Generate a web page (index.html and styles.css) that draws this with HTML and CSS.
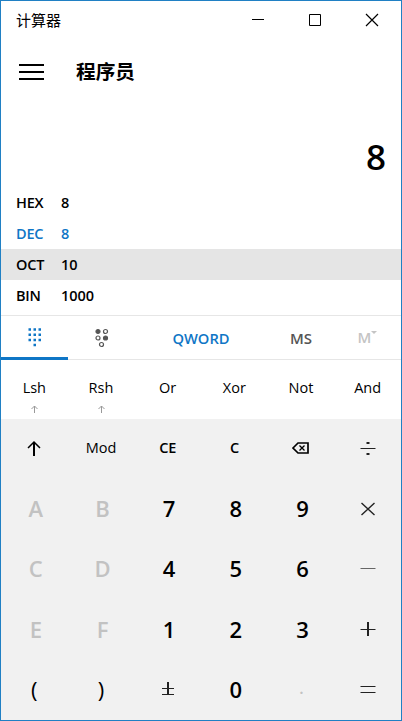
FILE: index.html
```html
<!DOCTYPE html>
<html lang="zh-CN">
<head>
<meta charset="utf-8">
<title>计算器</title>
<link rel="stylesheet" href="styles.css">
</head>
<body>
<main class="window">
  <header class="titlebar">
    <span class="app-name">计算器</span>
    <div class="controls">
      <svg width="57" height="38"><path d="M22 18.5h12"/></svg>
      <svg width="57" height="38"><path d="M22.5 13.5h11v11h-11z"/></svg>
      <svg class="close" width="57" height="38"><path d="M22 13l12 12m0-12l-12 12"/></svg>
    </div>
  </header>
  <div class="mode">
    <svg class="menu" width="25" height="16"><path d="M0 1h25M0 8h25M0 15h25"/></svg>
    <h1>程序员</h1>
  </div>
  <div class="result">8</div>
  <div class="radixes">
    <div class="radix"><span>HEX</span><b>8</b></div>
    <div class="radix active"><span>DEC</span><b>8</b></div>
    <div class="radix hover"><span>OCT</span><b>10</b></div>
    <div class="radix"><span>BIN</span><b>1000</b></div>
  </div>
  <nav class="toolbar">
    <button class="tab selected"><svg width="14" height="20"><path d="M.5 2.500h2.500m2.500 0h2.500m2.500 0h2.500M.5 7.700h2.500m2.500 0h2.500m2.500 0h2.500M.5 12.900h2.500m2.500 0h2.500m2.500 0h2.500M5.500 18h2.500"/></svg></button>
    <button class="tab"><svg class="bits" width="15" height="20"><circle class="filled" cx="4" cy="3.500" r="2"/><circle cx="11.500" cy="3.500" r="2"/><circle cx="4" cy="10" r="2"/><circle class="filled" cx="11.500" cy="10" r="2"/><circle cx="7.500" cy="16.500" r="2"/></svg></button>
    <button class="tab word">QWORD</button>
    <button class="tab store">MS</button>
    <button class="tab memory">M<svg width="6" height="4"><path d="M0 0h6L3 3z"/></svg></button>
  </nav>
  <div class="bitwise">
    <button>Lsh<svg class="hint" width="7" height="8"><path d="M3.500 8V1M.5 4l3-3 3 3"/></svg></button>
    <button>Rsh<svg class="hint" width="7" height="8"><path d="M3.500 8V1M.5 4l3-3 3 3"/></svg></button>
    <button>Or</button>
    <button>Xor</button>
    <button>Not</button>
    <button>And</button>
  </div>
  <div class="keypad">
    <button><svg class="shift" width="16" height="16"><path d="M2 8l6-6 6 6"/><path class="stem" d="M8 2v14"/></svg></button>
    <button class="mod">Mod</button>
    <button class="clear">CE</button>
    <button class="clear">C</button>
    <button><svg class="erase" width="17" height="12"><path d="M1 6l5-5h10v10H6z"/><path class="cross" d="M7.500 3.500l5 5m0-5l-5 5"/></svg></button>
    <button><svg class="op" width="16" height="16"><path d="M.5 8.500h15"/><path class="dot" d="M6.500 3h3M6.500 14h3"/></svg></button>

    <button class="digit off">A</button>
    <button class="digit off">B</button>
    <button class="digit">7</button>
    <button class="digit">8</button>
    <button class="digit">9</button>
    <button><svg class="op times" width="16" height="16"><path d="M1.500 3l13 12M14.500 3l-13 12"/></svg></button>

    <button class="digit off">C</button>
    <button class="digit off">D</button>
    <button class="digit">4</button>
    <button class="digit">5</button>
    <button class="digit">6</button>
    <button><svg class="op minus" width="16" height="16"><path d="M.5 8.500h15"/></svg></button>

    <button class="digit off">E</button>
    <button class="digit off">F</button>
    <button class="digit">1</button>
    <button class="digit">2</button>
    <button class="digit">3</button>
    <button><svg class="op" width="16" height="16"><path d="M.5 8.500h15"/><path class="dot" d="M8 1v14"/></svg></button>

    <button class="paren">(</button>
    <button class="paren">)</button>
    <button><svg class="op" width="16" height="16"><path d="M2 7.500h12M2 13.500h12"/><path class="dot" d="M8 1v12"/></svg></button>
    <button class="digit">0</button>
    <button class="digit off point">.</button>
    <button><svg class="op equals" width="16" height="16"><path d="M.5 5.500h15M.5 11.500h15"/></svg></button>
  </div>
</main>
</body>
</html>
```
FILE: styles.css
```css
* { box-sizing: border-box; }

body {
  margin: 0;
  font-family: "Open Sans", "Noto Sans", "Noto Sans CJK SC", sans-serif;
  font-size: 14.5px;
  color: #000;
}

svg { display: block; fill: none; stroke: currentColor; }

button {
  display: flex;
  align-items: center;
  justify-content: center;
  min-width: 0;
  padding: 0;
  border: 0;
  background: none;
  font: inherit;
  color: inherit;
}

.window {
  display: flex;
  flex-direction: column;
  width: 402px;
  height: 721px;
  border: 1px solid #2080c4;
  background: #fff;
}

.titlebar {
  display: flex;
  justify-content: space-between;
  height: 38px;
  padding-left: 15px;
}

.app-name {
  font-family: "Noto Sans CJK SC", sans-serif;
  font-size: 15px;
  line-height: 38px;
}

.controls { display: flex; }
.close { stroke-width: 1.2; }

.mode {
  display: flex;
  align-items: center;
  gap: 32px;
  height: 66px;
  padding-left: 18px;
}

.menu { stroke-width: 2; }

h1 {
  margin: 0 0 2px;
  font: 700 19.7px/28px "Noto Sans CJK SC", sans-serif;
}

.result {
  height: 82px;
  padding: 26px 15px 0 0;
  font-size: 35px;
  font-weight: 600;
  line-height: 52px;
  text-align: right;
}

.radixes { height: 128px; }

.radix {
  display: flex;
  height: 31px;
  padding-left: 15px;
  font-size: 14.5px;
  font-weight: 600;
  line-height: 31px;
}

.radix span { width: 45px; letter-spacing: -.2px; }
.radix b { font-weight: 600; }
.radix.active { color: #0f76c6; }
.radix.hover { background: #e5e5e5; }

.toolbar {
  display: grid;
  grid-template-columns: 67px 67px 133px 66px 67px;
  height: 45px;
  border-top: 1px solid #e6e6e6;
  border-bottom: 1px solid #e6e6e6;
  color: #555;
}

.tab { font-weight: 600; }

.tab.selected {
  margin-bottom: -1px;
  padding-top: 1px;
  border-bottom: 3px solid #0f76c6;
  stroke-width: 2.5;
  color: #0f76c6;
}

.bits { stroke-width: 1.2; }
.filled { fill: currentColor; }
.word { padding-right: 1px; color: #0f76c6; font-size: 14.7px; }
.store { font-size: 15px; }
.memory { padding-bottom: 2px; color: #c4c4c4; font-size: 15px; }
.memory svg { margin: 0 0 8px; fill: currentColor; stroke: none; }

.bitwise {
  display: grid;
  grid-template-columns: repeat(6, 1fr);
  height: 59px;
}

.bitwise button { position: relative; padding-bottom: 5px; }

.hint {
  position: absolute;
  bottom: 6px;
  left: calc(50% - 3px);
  color: #999;
}

.keypad {
  display: grid;
  flex: 1;
  grid-template-columns: repeat(6, 1fr);
  grid-template-rows: repeat(5, 1fr);
  background: #f1f1f1;
}

.keypad button { padding: 0 0 2px; }

.stem, .dot { stroke-width: 2; }
.shift { stroke-width: 1.5; }
.erase { stroke-width: 1.7; }
.cross { stroke-width: 1.3; }
.op { color: #222; }
.times { stroke-width: 1.4; }
.minus { color: #666; }
.keypad .mod { padding-bottom: 3px; }
.keypad .clear { padding-bottom: 3px; font-weight: 600; font-size: 14.5px; letter-spacing: -.3px; }
.keypad .digit { padding-left: 3px; font-size: 22px; font-weight: 600; }
.keypad .off { color: #c2c2c2; }
.paren { font-size: 22px; }
.keypad .point { padding: 0 0 4px 1px; font-size: 16px; }
```
